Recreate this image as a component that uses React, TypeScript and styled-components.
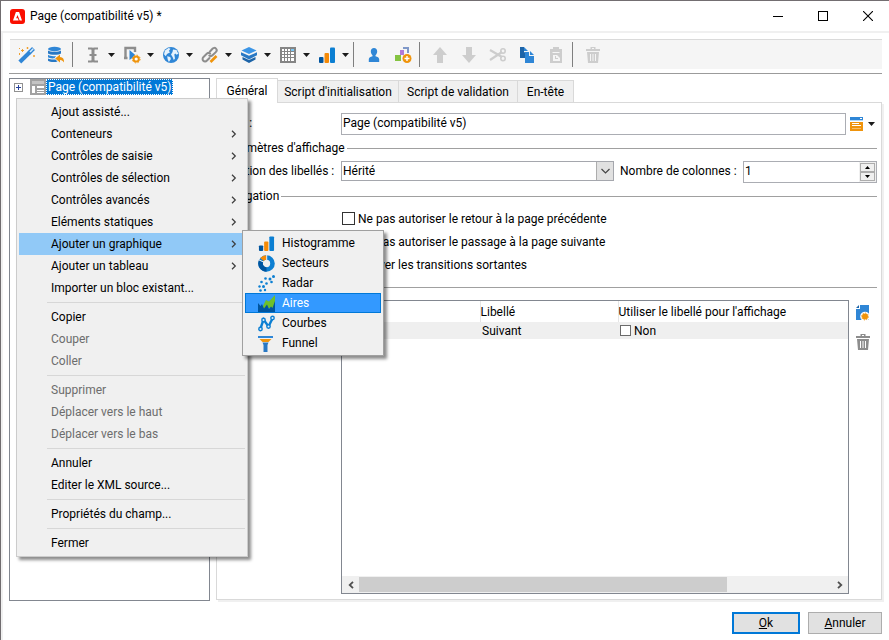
import React from "react";
import styled, { createGlobalStyle, css } from "styled-components";

const Global = createGlobalStyle`
  * { box-sizing: border-box; }
  body {
    margin: 0;
    background: #fff;
    color: #000;
    font: 12px/16px Roboto, "Open Sans", sans-serif;
  }
  button, input, select { font: inherit; color: inherit; margin: 0; }
  button { border: 0; padding: 0; background: none; }
`;

const Window = styled.div`
  min-height: 100vh;
  display: flex;
  flex-direction: column;
  border-top: 1px solid #736e71;
  border-left: 1px solid #706c6f;
`;

const TitleBar = styled.header`
  display: flex;
  align-items: center;
  height: 32px;
  padding-left: 9px;
  border-bottom: 2px solid #f0f0f0;
`;

const Title = styled.h1`
  flex: 1;
  margin: 0 0 0 5px;
  font-size: 12px;
  font-weight: 400;
`;

const CaptionButton = styled.button`
  width: 42px;
  height: 28px;
  margin-left: 3px;
  display: flex;
  align-items: center;
  justify-content: center;
`;

const Body = styled.div`
  flex: 1;
  display: flex;
  flex-direction: column;
  border-left: 2px solid #f0f0f0;
  padding: 6px 7px 6px 6px;
`;

const ToolbarFrame = styled.div`
  border-bottom: 1px solid #9b9b9b;
  padding: 0 0 4px 1px;
`;

const Toolbar = styled.div`
  display: flex;
  align-items: center;
  height: 30px;
  padding-left: 2px;
  background: #f5f5f5;
  border-top: 1px solid #dadada;
`;

const ToolButton = styled.button`
  flex: none;
  width: 29px;
  height: 26px;
  display: flex;
  align-items: center;
  justify-content: center;
`;

const ArrowButton = styled.button`
  flex: none;
  width: 10px;
  height: 26px;
  padding-right: 2px;
  display: flex;
  align-items: center;
  justify-content: center;
`;

const ToolSeparator = styled.span`
  width: 1px;
  height: 25px;
  margin: 0 5px 0 2px;
  background: #7f7f7f;
`;

const Main = styled.main`
  flex: 1;
  display: flex;
  gap: 6px;
  margin-top: 4px;
`;

const TreePane = styled.section`
  position: relative;
  flex: none;
  width: 201px;
  border: 1px solid #828790;
`;

const TreeRow = styled.div`
  display: flex;
  align-items: center;
  height: 16px;
  padding-left: 4px;
`;

const Expander = styled.button`
  width: 9px;
  height: 9px;
  margin-right: 7px;
  display: flex;
`;

const TreeLabel = styled.span`
  height: 16px;
  padding: 0 1px;
  line-height: 14px;
  color: #fff;
  background: #0078d7;
  border: 1px dotted #fff;
  white-space: nowrap;
`;

const Menu = styled.div<{ $dark?: boolean }>`
  position: absolute;
  z-index: 2;
  padding: 2px;
  background: #f0f0f0;
  border: 1px solid ${(p) => (p.$dark ? "#a0a0a0" : "#cccccc")};
  box-shadow: 3px 3px 3px rgba(0, 0, 0, 0.45);
`;

const ContextMenu = styled(Menu)`
  left: 6px;
  top: 19px;
  width: 232px;
`;

const SubMenu = styled(Menu)`
  left: 223px;
  top: -3px;
  width: 142px;
`;

const MenuEntry = styled.div`
  position: relative;
`;

const MenuItem = styled.button<{ $open?: boolean }>`
  display: flex;
  align-items: center;
  justify-content: space-between;
  width: 100%;
  height: 22px;
  padding: 0 8px 0 32px;
  text-align: left;
  white-space: nowrap;
  background: ${(p) => (p.$open ? "#91c9f7" : "transparent")};
  &:disabled { color: #6d6d6d; }
`;

const MenuSeparator = styled.hr`
  height: 1px;
  margin: 3px 0 3px 28px;
  border: 0;
  background: #d7d7d7;
`;

const SubItem = styled.button<{ $active?: boolean }>`
  display: flex;
  align-items: center;
  gap: 7px;
  width: 100%;
  height: 20px;
  padding-left: 12px;
  text-align: left;
  border: 1px solid transparent;
  ${(p) =>
    p.$active &&
    css`
      color: #fff;
      background: #3399ff;
      border-color: #0078d7;
    `}
`;

const Notebook = styled.section`
  flex: 1;
  min-width: 0;
  display: flex;
  flex-direction: column;
  margin-bottom: 1px;
`;

const Tabs = styled.div`
  display: flex;
  align-items: flex-end;
  height: 24px;
`;

const Tab = styled.button<{ $selected?: boolean; $width: number }>`
  min-width: ${(p) => p.$width}px;
  height: 22px;
  padding: 0 4px;
  white-space: nowrap;
  background: #f0f0f0;
  border: 1px solid #d9d9d9;
  border-left: 0;
  border-bottom: 0;
  ${(p) =>
    p.$selected &&
    css`
      height: 25px;
      margin-bottom: -1px;
      background: #fff;
      border-left: 1px solid #d9d9d9;
      position: relative;
    `}
`;

const Panel = styled.div`
  flex: 1;
  display: flex;
  flex-direction: column;
  padding: 10px 4px 5px 5px;
  border: 1px solid #d9d9d9;
  box-shadow: 2px 2px 0 #f0f0f0;
`;

const FormRow = styled.div`
  display: flex;
  align-items: flex-start;
  height: 22px;
`;

const FieldLabel = styled.label<{ $wide?: boolean }>`
  flex: none;
  width: ${(p) => (p.$wide ? 129 : 119)}px;
  padding-left: ${(p) => (p.$wide ? 6 : 0)}px;
  line-height: 20px;
  white-space: nowrap;
`;

const TextInput = styled.input`
  flex: 1;
  min-width: 0;
  height: 22px;
  padding: 0 1px 2px;
  border: 1px solid #abadb3;
  background: #fff;
`;

const FieldButton = styled.button`
  width: 31px;
  height: 22px;
  display: flex;
  align-items: center;
  gap: 5px;
  padding-left: 4px;
`;

const SelectWrap = styled.div`
  flex: 1;
  display: grid;
  grid-template-columns: 1fr 17px;
  height: 20px;
  border: 1px solid #a5a7ad;
`;

const Select = styled.select`
  grid-area: 1 / 1 / 2 / 3;
  appearance: none;
  height: 18px;
  padding: 0 1px;
  border: 0;
  background: #fff;
`;

const SelectArrow = styled.span`
  grid-area: 1 / 2 / 2 / 3;
  z-index: 1;
  pointer-events: none;
  display: flex;
  align-items: center;
  justify-content: center;
  background: #e1e1e1;
  border-left: 1px solid #adadad;
`;

const Spin = styled.div`
  flex: none;
  display: flex;
  width: 134px;
  height: 22px;
  border: 1px solid #abadb3;
`;

const SpinInput = styled.input`
  flex: 1;
  min-width: 0;
  padding: 0 1px 2px;
  border: 0;
  appearance: textfield;
  &::-webkit-inner-spin-button { appearance: none; }
`;

const SpinButtons = styled.div`
  width: 17px;
  padding: 1px;
  display: flex;
  flex-direction: column;
  background: #f0f0f0;
`;

const SpinButton = styled.button`
  flex: 1;
  display: flex;
  align-items: center;
  justify-content: center;
  background: #f0f0f0;
  border: 1px solid #adadad;
`;

const Fieldset = styled.fieldset`
  display: flex;
  flex-direction: column;
  min-width: 0;
  margin: 0;
  padding: 0;
  border: 0;
`;

const GrowSection = styled.div`
  flex: 1;
  display: flex;
  flex-direction: column;
`;

const Legend = styled.div`
  display: flex;
  align-items: center;
  gap: 2px;
  height: 26px;
  white-space: nowrap;
  &::after {
    content: "";
    flex: 1;
    height: 1px;
    background: #a0a0a0;
  }
`;

const Checks = styled.div`
  margin-top: -2px;
  padding-left: 120px;
`;

const CheckLabel = styled.label`
  display: flex;
  align-items: center;
  gap: 3px;
  height: 23px;
  white-space: nowrap;
`;

const Checkbox = styled.input<{ $small?: boolean }>`
  appearance: none;
  flex: none;
  width: ${(p) => (p.$small ? 11 : 13)}px;
  height: ${(p) => (p.$small ? 11 : 13)}px;
  border: 1px solid ${(p) => (p.$small ? "#6b6b6b" : "#333")};
  background: #fff;
`;

const Rule = styled.hr`
  width: 100%;
  height: 1px;
  margin: 11px 0 12px;
  border: 0;
  background: #a0a0a0;
`;

const TableRow = styled.div`
  flex: 1;
  display: flex;
  padding-left: 119px;
`;

const TableBox = styled.div`
  flex: 1;
  min-width: 0;
  display: flex;
  flex-direction: column;
  justify-content: space-between;
  border: 1px solid #828790;
`;

const Table = styled.table`
  width: 100%;
  border-collapse: collapse;
  table-layout: fixed;
`;

const Th = styled.th<{ $fixed?: boolean }>`
  width: ${(p) => (p.$fixed ? "138px" : "auto")};
  height: 21px;
  padding: 0;
  font-weight: 400;
  text-align: left;
  white-space: nowrap;
  border-right: 1px solid #e5e5e5;
  &:last-child { border-right: 0; }
`;

const Td = styled.td`
  height: 17px;
  padding: 0 2px;
  background: #efefef;
`;

const CellCheck = styled.label`
  display: flex;
  align-items: center;
  gap: 3px;
`;

const SideTools = styled.div`
  width: 28px;
  display: flex;
  flex-direction: column;
  align-items: center;
  gap: 12px;
  padding-top: 5px;
`;

const IconButton = styled.button`
  display: flex;
`;

const ScrollBar = styled.div`
  display: flex;
  align-items: center;
  height: 17px;
  background: #f0f0f0;
`;

const ScrollArrow = styled.button`
  width: 17px;
  height: 17px;
  display: flex;
  align-items: center;
  justify-content: center;
`;

const ScrollTrack = styled.div`
  flex: 1;
  height: 15px;
`;

const ScrollThumb = styled.div`
  width: 78%;
  height: 100%;
  background: #cdcdcd;
`;

const Footer = styled.footer`
  display: flex;
  justify-content: flex-end;
  gap: 8px;
  margin-top: 11px;
`;

const DialogButton = styled.button<{ $default?: boolean }>`
  width: ${(p) => (p.$default ? 68 : 74)}px;
  height: 22px;
  background: #e1e1e1;
  border: ${(p) => (p.$default ? "2px solid #0078d7" : "1px solid #adadad")};
`;

/* ---------- icons ---------- */

const Svg = ({ w = 18, h = 18, box, children }: { w?: number; h?: number; box?: string; children: React.ReactNode }) => (
  <svg width={w} height={h} viewBox={box ?? `0 0 ${w} ${h}`} fill="none" aria-hidden="true">
    {children}
  </svg>
);

const Logo = () => (
  <Svg w={15} h={15}>
    <rect width="15" height="15" rx="3" fill="#fa0f00" />
    <path d="M5.9 3h3.2L12 11.6H9.7L7.5 6.1 6.2 9.3h1.6l.9 2.3H3z" fill="#fff" />
  </Svg>
);

const Caret = () => (
  <Svg w={7} h={4}>
    <path d="M0 0h7L3.5 4z" fill="#1b1b1b" />
  </Svg>
);

const ChevronRight = () => (
  <Svg w={6} h={8}>
    <path d="M1 .8L4.3 4 1 7.2" stroke="#3c3c3c" strokeWidth="1.2" />
  </Svg>
);

const Wand = () => (
  <Svg>
    <path d="M1.800 16L12 6" stroke="#2f86d6" strokeWidth="4" />
    <path d="M11 7l4.500-4.500" stroke="#2f86d6" strokeWidth="4" />
    <path d="M12 6l3.200-3.200" stroke="#d5e9fa" strokeWidth="1.600" />
    <path d="M4.500 3v3M3 4.500h3M9.500 1v2M8.500 2h2M1.500 7v2M1 2.500h1M16 9v2M15 10h2" stroke="#f0a030" />
  </Svg>
);

const Database = () => (
  <Svg>
    <ellipse cx="7.500" cy="3" rx="6.500" ry="2.200" fill="#2f86d6" />
    <path d="M1 4.500c1.500 1.700 11.500 1.700 13 0v3c-2 1.700-11 1.700-13 0z" fill="#2878c4" />
    <path d="M1 8.800c2 1.600 6 1.600 8 1.200l-1.500 2.300c-3 .3-5 0-6.500-1z" fill="#2f86d6" />
    <path d="M1 12.500c2 1.200 5 1.200 7.500 1l2 2c-3 1-8 .5-9.500-.8z" fill="#2878c4" />
    <path d="M13 8.500l-4.800 4 4.800 4v-2.600c2 0 3 .8 4 2.600.3-3-1-5.300-4-5.400z" fill="#ef940c" />
  </Svg>
);

const TextCursor = () => (
  <Svg>
    <path d="M4 2.500h4l1 1 1-1h4M4 15.500h4l1-1 1 1h4M5.500 9h7" stroke="#8d8d8d" strokeWidth="2.200" />
    <path d="M9 3v12" stroke="#8d8d8d" strokeWidth="3" />
  </Svg>
);

const PageGear = () => (
  <Svg>
    <path d="M2.500 12V2h9.500v4M1 12h3.500" stroke="#8d8d8d" strokeWidth="2.400" />
    <path d="M6.500 4l5.500 4.800-2.700 3.200-2.800 2z" fill="#2f86d6" />
    <circle cx="13.200" cy="13" r="2.600" stroke="#ef940c" strokeWidth="2" fill="#fff" />
    <circle cx="13.200" cy="13" r="3.900" stroke="#ef940c" strokeWidth="1" strokeDasharray="1.500 1.560" />
  </Svg>
);

const Globe = () => (
  <Svg>
    <circle cx="9" cy="9" r="8" fill="#2f86d6" />
    <path d="M3 4.500L6.500 2l2 .8L6.800 5l1.400 1.300L5 8l-1.200 2.200L2 8.200zM5.200 10.200l3 .8.700 2-2 3-1.200-2.600zM11 3.500l3.500.5 1.800 3.800-1.800 1-1.200-1.300-1 1 .7 4-1.200 1.600-1.200-3-1.600-2.600L10.500 6z" fill="#e6f2fc" />
  </Svg>
);

const LinkPen = () => (
  <Svg>
    <g stroke="#8d8d8d" strokeWidth="2" strokeLinecap="round">
      <path d="M9 5.500l2.500-2.700c1.200-1.200 2.500-1.200 3.500-.2s1 2.300-.2 3.500L11.500 9.300c-.9.900-2.200 1-3.200.2" />
      <path d="M8.500 12L6 14.500c-1.200 1.200-2.700 1.200-3.700.200s-1-2.500.2-3.700L6 7.600c.9-.8 2.300-.9 3.200 0" />
    </g>
    <path d="M9.500 16l6-6" stroke="#ef940c" strokeWidth="2.600" />
  </Svg>
);

const Layers = () => (
  <Svg>
    <path d="M9 1l7.500 3.500L9 8 1.500 4.500z" fill="#3b95e6" />
    <path d="M1 6.200l8 3.600 8-3.600v3l-8 4.200-8-4.200z" fill="#2878c4" />
    <path d="M2.500 11l6.500 3 6.500-3v2.600L9 17l-6.500-3.400z" fill="#1d64a8" />
  </Svg>
);

const Grid = () => (
  <Svg>
    <rect x="1" y="1" width="16" height="16" fill="#858585" />
    <path d="M3 3h2v2H3zM6 3h2v2H6zM9 3h2v2H9zM3 6h2v2H3zM6 6h2v2H6zM9 6h2v2H9zM12 6h3v2h-3zM3 9h2v2H3zM6 9h2v2H6zM9 9h2v2H9zM12 9h3v2h-3zM3 12h2v3H3zM6 12h2v3H6zM9 12h2v3H9zM12 12h3v3h-3z" fill="#fff" />
    <path d="M12 3h3v2h-3z" fill="#7cc8f5" />
  </Svg>
);

const Bars = ({ size = 18 }: { size?: number }) => (
  <Svg w={size} h={size} box="0 0 18 18">
    <rect x="1" y="11" width="4.500" height="6" rx="1" fill="#00559f" />
    <rect x="6.500" y="7" width="4.500" height="10" rx="1" fill="#f58a07" />
    <rect x="12" y="1.500" width="5" height="15.500" rx="1" fill="#0c7fd2" />
  </Svg>
);

const Person = () => (
  <Svg>
    <path d="M9 2c2 0 3.200 1.300 3.200 3.300 0 1.700-.7 3-1.700 4v1c2 .6 3.700 1.300 3.700 3V16H3.800v-2.700c0-1.700 1.700-2.400 3.700-3v-1c-1-1-1.700-2.300-1.700-4C5.800 3.300 7 2 9 2z" fill="#2f86d6" />
  </Svg>
);

const Shapes = () => (
  <Svg>
    <rect x="1" y="9" width="6" height="6" fill="#84c341" />
    <path d="M6 4h4v5H6z" fill="#b07ad8" />
    <path d="M9 1h6v6h-2V3H9z" fill="#7f98c8" />
    <circle cx="13" cy="12.500" r="4.500" fill="#ef940c" />
    <path d="M13 10v5M10.500 12.500h5" stroke="#fff" strokeWidth="1.400" />
  </Svg>
);

const ArrowUp = () => (
  <Svg>
    <path d="M9 1l7 8h-4v8H6V9H2z" fill="#cdcdcd" />
  </Svg>
);

const ArrowDown = () => (
  <Svg>
    <path d="M9 17l7-8h-4V1H6v8H2z" fill="#cdcdcd" />
  </Svg>
);

const Scissors = () => (
  <Svg>
    <path d="M1 4l12 7M1 14L13 6" stroke="#cdcdcd" strokeWidth="2.200" />
    <circle cx="14" cy="5" r="2.200" stroke="#cdcdcd" strokeWidth="1.600" />
    <circle cx="14" cy="12.500" r="2.200" stroke="#cdcdcd" strokeWidth="1.600" />
  </Svg>
);

const Copy = () => (
  <Svg>
    <path d="M2 1h4v5l2 1v5H2z" fill="#1d64a8" />
    <path d="M6 1l4 4H6z" fill="#2f86d6" />
    <path d="M7 6h4v4h5v7H7z" fill="#2f86d6" />
    <path d="M12 5l4 4h-4z" fill="#2f86d6" />
  </Svg>
);

const Paste = () => (
  <Svg>
    <path d="M3 3h3V1h6v2h3v14H3z" fill="#cdcdcd" />
    <path d="M5.500 6v1h7V6M6 9h4l3 3v3H6z" fill="#f5f5f5" />
    <path d="M8 10h1v2h2v1H8z" fill="#cdcdcd" />
  </Svg>
);

const Trash = ({ color = "#cdcdcd", gap = "#f5f5f5" }: { color?: string; gap?: string }) => (
  <Svg>
    <path d="M2 3h4.500V1h5v2H16v2H2zM3 6h12l-1 11H4z" fill={color} />
    <path d="M6.500 8v7M9 8v7M11.500 8v7" stroke={gap} />
    <path d="M8 2.500h2" stroke={gap} />
  </Svg>
);

const PageLayout = () => (
  <Svg w={16} h={16}>
    <path d="M0 0h16v16H0z" fill="#a2a2a2" />
    <path d="M2 2h12v3H2zM2 7h3v7H2zM7 7h7v2H7zM7 11h7v1H7zM7 13h7v1H7z" fill="#fff" />
    <path d="M2 2h12v3H2z" fill="#c4c4c4" />
  </Svg>
);

const FormIcon = () => (
  <Svg w={13} h={14}>
    <path d="M0 0h13v3H0z" fill="#2f86d6" />
    <path d="M10 1h2v1h-2z" fill="#fff" />
    <path d="M0 3h13v1H0z" fill="#b5d9f5" />
    <path d="M0 5h13v9H0z" fill="#ef940c" />
    <path d="M2 6.500h7M2 8.500h9" stroke="#fff" />
    <path d="M2 11.500h9" stroke="#f6bd6b" />
  </Svg>
);

const NewPage = () => (
  <Svg w={14} h={16}>
    <path d="M4 0h9v15H0V4h4z" fill="#2f86d6" />
    <path d="M0 3l3-3v3z" fill="#1d64a8" />
    <circle cx="9" cy="11.500" r="4.800" fill="#fff" />
    <circle cx="9" cy="11.500" r="3" fill="#ef940c" />
    <circle cx="9" cy="11.500" r="3.400" stroke="#ef940c" strokeDasharray="1.300 1.300" />
  </Svg>
);

const Donut = () => (
  <Svg w={17} h={17}>
    <circle cx="8.500" cy="8.500" r="6" stroke="#0c7fd2" strokeWidth="4.600" />
    <path d="M8.500 14.500A6 6 0 0 1 3 6.200" stroke="#00559f" strokeWidth="4.600" />
    <path d="M4 4.600A6 6 0 0 1 8.500 2.500" stroke="#f58a07" strokeWidth="4.600" />
    <path d="M8.700 0v5.500M.8 4.800l4.700 2.200" stroke="#f0f0f0" />
  </Svg>
);

const Dots = () => (
  <Svg w={17} h={17}>
    <g fill="#0c7fd2">
      <circle cx="3.500" cy="7" r="1.300" /><circle cx="7.500" cy="3.500" r="1.300" />
      <circle cx="12" cy="4" r="1.500" /><circle cx="15.500" cy="1.500" r="1.500" />
      <circle cx="8.500" cy="8.500" r="1.300" /><circle cx="13.500" cy="7" r="1.300" />
      <circle cx="1.500" cy="11.500" r="1.200" /><circle cx="5.500" cy="11.500" r="1.500" />
      <circle cx="2.500" cy="15.500" r="1.300" /><circle cx="7" cy="15" r="1.200" />
    </g>
  </Svg>
);

const Area = () => (
  <Svg w={17} h={17}>
    <path d="M4 13L8 5l3 1.500L17 0v13z" fill="#6ec02b" />
    <path d="M0 17V8l2.500 3L4 9l2 4.500L9 9.500l2 4.500 2-2.500 1.500 1.500L17 6v11z" fill="#00559f" />
  </Svg>
);

const Curve = () => (
  <Svg w={17} h={17}>
    <path d="M2.500 13.500L5.500 4.500 10.500 11.500l4-8" stroke="#0c7fd2" strokeWidth="2.400" />
    <g fill="#dfeefb" stroke="#0c7fd2" strokeWidth="1.400">
      <circle cx="2.500" cy="14" r="1.700" /><circle cx="5.500" cy="5" r="1.700" />
      <circle cx="10.500" cy="11.500" r="1.700" /><circle cx="14.500" cy="3" r="1.700" />
    </g>
  </Svg>
);

const Funnel = () => (
  <Svg w={17} h={17}>
    <path d="M0 1h15v2H0z" fill="#2f86d6" />
    <path d="M1.500 4h12L10.500 7h-6z" fill="#ef940c" />
    <path d="M4.500 7.500h6L9.500 10v7h-4v-7z" fill="#2878c4" />
  </Svg>
);

/* ---------- data ---------- */

type Tool = { name: string; icon: React.ReactNode; menu?: boolean; off?: boolean } | null;

const tools: Tool[] = [
  { name: "Assistant", icon: <Wand /> },
  { name: "Base de données", icon: <Database /> },
  null,
  { name: "Contrôles de saisie", icon: <TextCursor />, menu: true },
  { name: "Contrôles de sélection", icon: <PageGear />, menu: true },
  { name: "Contrôles avancés", icon: <Globe />, menu: true },
  { name: "Liens", icon: <LinkPen />, menu: true },
  { name: "Conteneurs", icon: <Layers />, menu: true },
  { name: "Tableaux", icon: <Grid />, menu: true },
  { name: "Graphiques", icon: <Bars />, menu: true },
  null,
  { name: "Personne", icon: <Person /> },
  { name: "Bloc existant", icon: <Shapes /> },
  null,
  { name: "Déplacer vers le haut", icon: <ArrowUp />, off: true },
  { name: "Déplacer vers le bas", icon: <ArrowDown />, off: true },
  { name: "Couper", icon: <Scissors />, off: true },
  { name: "Copier", icon: <Copy /> },
  { name: "Coller", icon: <Paste />, off: true },
  null,
  { name: "Supprimer", icon: <Trash />, off: true },
];

type Entry = { label: string; sub?: boolean; open?: boolean; off?: boolean };

const menuGroups: Entry[][] = [
  [
    { label: "Ajout assisté..." },
    { label: "Conteneurs", sub: true },
    { label: "Contrôles de saisie", sub: true },
    { label: "Contrôles de sélection", sub: true },
    { label: "Contrôles avancés", sub: true },
    { label: "Eléments statiques", sub: true },
    { label: "Ajouter un graphique", sub: true, open: true },
    { label: "Ajouter un tableau", sub: true },
    { label: "Importer un bloc existant..." },
  ],
  [{ label: "Copier" }, { label: "Couper", off: true }, { label: "Coller", off: true }],
  [
    { label: "Supprimer", off: true },
    { label: "Déplacer vers le haut", off: true },
    { label: "Déplacer vers le bas", off: true },
  ],
  [{ label: "Annuler" }, { label: "Editer le XML source..." }],
  [{ label: "Propriétés du champ..." }],
  [{ label: "Fermer" }],
];

const charts = [
  { label: "Histogramme", icon: <Bars size={17} /> },
  { label: "Secteurs", icon: <Donut /> },
  { label: "Radar", icon: <Dots /> },
  { label: "Aires", icon: <Area />, active: true },
  { label: "Courbes", icon: <Curve /> },
  { label: "Funnel", icon: <Funnel /> },
];

const tabs = [
  { label: "Général", width: 62 },
  { label: "Script d'initialisation", width: 121 },
  { label: "Script de validation", width: 119 },
  { label: "En-tête", width: 56 },
];

const options = [
  "Ne pas autoriser le retour à la page précédente",
  "Ne pas autoriser le passage à la page suivante",
  "Activer les transitions sortantes",
];

const ChartMenu = () => (
  <SubMenu $dark role="menu">
    {charts.map((c) => (
      <SubItem key={c.label} role="menuitem" $active={c.active}>
        {c.icon}
        {c.label}
      </SubItem>
    ))}
  </SubMenu>
);

export default function App() {
  return (
    <>
      <Global />
      <Window>
        <TitleBar>
          <Logo />
          <Title>Page (compatibilité v5) *</Title>
          <CaptionButton aria-label="Réduire">
            <Svg w={10} h={10}><path d="M0 5.500h10" stroke="#000" /></Svg>
          </CaptionButton>
          <CaptionButton aria-label="Agrandir">
            <Svg w={10} h={10}><rect x=".5" y=".5" width="9" height="9" stroke="#000" /></Svg>
          </CaptionButton>
          <CaptionButton aria-label="Fermer la fenêtre">
            <Svg w={10} h={10}><path d="M0 0l10 10M10 0L0 10" stroke="#000" strokeWidth="1.100" /></Svg>
          </CaptionButton>
        </TitleBar>
        <Body>
          <ToolbarFrame>
            <Toolbar role="toolbar">
              {tools.map((t, i) =>
                t === null ? (
                  <ToolSeparator key={i} />
                ) : (
                  <React.Fragment key={i}>
                    <ToolButton aria-label={t.name} disabled={t.off}>{t.icon}</ToolButton>
                    {t.menu && <ArrowButton aria-label={`${t.name} : menu`}><Caret /></ArrowButton>}
                  </React.Fragment>
                )
              )}
            </Toolbar>
          </ToolbarFrame>
          <Main>
            <TreePane>
              <TreeRow>
                <Expander aria-label="Développer">
                  <Svg w={9} h={9}>
                    <rect x=".5" y=".5" width="8" height="8" fill="#fff" stroke="#919191" />
                    <path d="M2 4.500h5M4.500 2v5" stroke="#26419b" />
                  </Svg>
                </Expander>
                <PageLayout />
                <TreeLabel>Page (compatibilité v5)</TreeLabel>
              </TreeRow>
              <ContextMenu role="menu">
                {menuGroups.map((group, g) => (
                  <React.Fragment key={g}>
                    {g > 0 && <MenuSeparator />}
                    {group.map((m) => (
                      <MenuEntry key={m.label}>
                        <MenuItem role="menuitem" $open={m.open} disabled={m.off}>
                          {m.label}
                          {m.sub && <ChevronRight />}
                        </MenuItem>
                        {m.open && <ChartMenu />}
                      </MenuEntry>
                    ))}
                  </React.Fragment>
                ))}
              </ContextMenu>
            </TreePane>
            <Notebook>
              <Tabs role="tablist">
                {tabs.map((t, i) => (
                  <Tab key={t.label} role="tab" aria-selected={i === 0} $selected={i === 0} $width={t.width}>
                    {t.label}
                  </Tab>
                ))}
              </Tabs>
              <Panel role="tabpanel">
                <FormRow>
                  <FieldLabel htmlFor="titre">Titre :</FieldLabel>
                  <TextInput id="titre" defaultValue="Page (compatibilité v5)" />
                  <FieldButton aria-label="Modifier le titre">
                    <FormIcon />
                    <Caret />
                  </FieldButton>
                </FormRow>
                <Fieldset>
                  <Legend>Paramètres d'affichage</Legend>
                  <FormRow>
                    <FieldLabel htmlFor="position">Position des libellés :</FieldLabel>
                    <SelectWrap>
                      <Select id="position" defaultValue="Hérité">
                        <option>Hérité</option>
                      </Select>
                      <SelectArrow>
                        <Svg w={9} h={6}><path d="M.5 1l4 4 4-4" stroke="#444" strokeWidth="1.200" /></Svg>
                      </SelectArrow>
                    </SelectWrap>
                    <FieldLabel $wide htmlFor="colonnes">Nombre de colonnes :</FieldLabel>
                    <Spin>
                      <SpinInput id="colonnes" type="number" defaultValue={1} />
                      <SpinButtons>
                        <SpinButton aria-label="Augmenter">
                          <Svg w={5} h={3}><path d="M0 3h5L2.500 0z" fill="#000" /></Svg>
                        </SpinButton>
                        <SpinButton aria-label="Diminuer">
                          <Svg w={5} h={3}><path d="M0 0h5L2.500 3z" fill="#000" /></Svg>
                        </SpinButton>
                      </SpinButtons>
                    </Spin>
                  </FormRow>
                </Fieldset>
                <Fieldset>
                  <Legend>Navigation</Legend>
                  <Checks>
                    {options.map((o) => (
                      <CheckLabel key={o}>
                        <Checkbox type="checkbox" />
                        {o}
                      </CheckLabel>
                    ))}
                  </Checks>
                </Fieldset>
                <GrowSection>
                  <Rule />
                  <TableRow>
                    <TableBox>
                      <Table>
                        <thead>
                          <tr>
                            <Th $fixed />
                            <Th $fixed>Libellé</Th>
                            <Th>Utiliser le libellé pour l'affichage</Th>
                          </tr>
                        </thead>
                        <tbody>
                          <tr>
                            <Td />
                            <Td>Suivant</Td>
                            <Td>
                              <CellCheck>
                                <Checkbox $small type="checkbox" />
                                Non
                              </CellCheck>
                            </Td>
                          </tr>
                        </tbody>
                      </Table>
                      <ScrollBar>
                        <ScrollArrow aria-label="Défiler à gauche">
                          <Svg w={6} h={8}><path d="M5 .8L1.700 4 5 7.200" stroke="#505050" strokeWidth="1.800" /></Svg>
                        </ScrollArrow>
                        <ScrollTrack><ScrollThumb /></ScrollTrack>
                        <ScrollArrow aria-label="Défiler à droite">
                          <Svg w={6} h={8}><path d="M1 .8L4.300 4 1 7.200" stroke="#505050" strokeWidth="1.800" /></Svg>
                        </ScrollArrow>
                      </ScrollBar>
                    </TableBox>
                    <SideTools>
                      <IconButton aria-label="Ajouter une transition"><NewPage /></IconButton>
                      <IconButton aria-label="Supprimer la transition"><Trash color="#8d8d8d" gap="#fff" /></IconButton>
                    </SideTools>
                  </TableRow>
                </GrowSection>
              </Panel>
            </Notebook>
          </Main>
          <Footer>
            <DialogButton $default><u>O</u>k</DialogButton>
            <DialogButton><u>A</u>nnuler</DialogButton>
          </Footer>
        </Body>
      </Window>
    </>
  );
}
